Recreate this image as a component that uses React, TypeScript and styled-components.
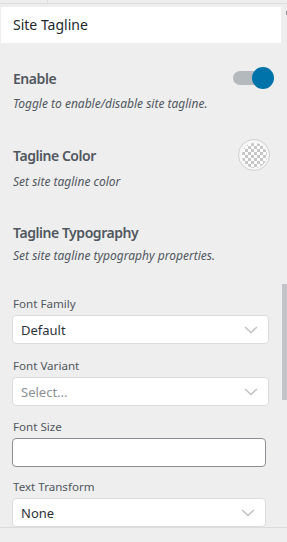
import React from "react";
import styled, { createGlobalStyle } from "styled-components";

const Global = createGlobalStyle`
  html, body { margin: 0; padding: 0; background: #eeeeee; }
  body { font-family: "Noto Sans", "Open Sans", sans-serif; width: 287px; height: 542px; overflow: hidden; }
  * { box-sizing: border-box; }
`;

const Frame = styled.div`
  height: 542px;
  display: flex;
  flex-direction: column;
`;

const TopStrip = styled.div`
  height: 4px;
  border-bottom: 1px solid #dcdcde;
  display: flex;
`;

const TopTab = styled.div`
  width: 48px;
  border-right: 1px solid #dcdcde;
`;

const Body = styled.div`
  height: 523px;
  display: flex;
  overflow: hidden;
`;

const Panel = styled.div`
  width: 282px;
  padding-top: 3px;
  display: flex;
  flex-direction: column;
`;

const Scrollbar = styled.div`
  width: 5px;
  display: flex;
  flex-direction: column;
  align-items: flex-end;
`;

const ScrollTick = styled.div`
  margin-top: 7px;
  width: 1px;
  height: 4px;
  background: #8c8f94;
`;

const ScrollThumb = styled.div`
  margin-top: 269px;
  width: 5px;
  height: 116px;
  background: #c3c4c7;
`;

const Header = styled.div`
  margin-left: 1px;
  width: 280px;
  height: 36px;
  background: #ffffff;
  padding-left: 12px;
  line-height: 36px;
  font-size: 14px;
  color: #23282d;
`;

const Content = styled.div`
  padding-left: 12px;
  display: flex;
  flex-direction: column;
`;

const Section = styled.div<{ $top: number }>`
  margin-top: ${(p) => p.$top}px;
  display: flex;
  flex-direction: column;
`;

const Row = styled.div<{ $right: number }>`
  height: 32px;
  display: flex;
  align-items: center;
  justify-content: space-between;
  padding-right: ${(p) => p.$right}px;
`;

const Title = styled.span`
  font-size: 14px;
  font-weight: 600;
  letter-spacing: -0.45px;
  color: #50575e;
  padding-left: 1px;
`;

const Desc = styled.div<{ $top: number }>`
  margin-top: ${(p) => p.$top}px;
  font-size: 12px;
  line-height: 16px;
  font-style: italic;
  color: #50575e;
  padding-left: 1px;
`;

const Toggle = styled.div`
  position: relative;
  width: 41px;
  height: 22px;
  display: flex;
  align-items: center;
`;

const Track = styled.div`
  width: 34px;
  height: 14px;
  border-radius: 7px;
  background: #b4b9be;
`;

const Knob = styled.div`
  position: absolute;
  right: 0;
  top: 0;
  width: 22px;
  height: 22px;
  border-radius: 50%;
  background: #0073aa;
`;

const Swatch = styled.div`
  width: 32px;
  height: 32px;
  border-radius: 50%;
  border: 1px solid #d0d0d0;
  background: #f7f7f7;
  display: flex;
  align-items: center;
  justify-content: center;
`;

const Checker = styled.div`
  width: 25px;
  height: 25px;
  border-radius: 50%;
  background-color: #ffffff;
  background-image: linear-gradient(45deg, #c6c6c6 25%, transparent 25%, transparent 75%, #c6c6c6 75%),
    linear-gradient(45deg, #c6c6c6 25%, transparent 25%, transparent 75%, #c6c6c6 75%);
  background-size: 6px 6px;
  background-position: 0 0, 3px 3px;
`;

const Fields = styled.div`
  margin-top: 31px;
  display: flex;
  flex-direction: column;
`;

const Field = styled.div<{ $top: number }>`
  margin-top: ${(p) => p.$top}px;
  display: flex;
  flex-direction: column;
`;

const Label = styled.label`
  font-size: 11.6px;
  line-height: 18px;
  color: #50575e;
  margin-bottom: 2px;
  padding-left: 1px;
`;

const SelectBox = styled.div<{ $width: number }>`
  width: ${(p) => p.$width}px;
  height: 29px;
  border: 1px solid #dcdcde;
  border-radius: 4px;
  background: #ffffff;
  display: flex;
  align-items: center;
  justify-content: space-between;
  padding: 0 10px 0 8px;
  flex-shrink: 0;
`;

const SelectText = styled.span<{ $placeholder?: boolean }>`
  font-size: 13px;
  color: ${(p) => (p.$placeholder ? "#8c8f94" : "#2c3338")};
`;

const TextInput = styled.div<{ $width: number }>`
  width: ${(p) => p.$width}px;
  height: 29px;
  border: 1px solid #8c8f94;
  border-radius: 4px;
  background: #ffffff;
  flex-shrink: 0;
`;

const Footer = styled.div`
  flex: 1;
  border-top: 1px solid #dcdcde;
  background: #eeeeee;
`;

const Chevron = () => (
  <svg width="14" height="8" viewBox="0 0 14 8" fill="none">
    <path d="M1 1l6 5.5L13 1" stroke="#c3c4c7" strokeWidth="1.6" />
  </svg>
);

const Select = ({ value, placeholder, width }: { value: string; placeholder?: boolean; width: number }) => (
  <SelectBox $width={width}>
    <SelectText $placeholder={placeholder}>{value}</SelectText>
    <Chevron />
  </SelectBox>
);

export default function App() {
  return (
    <>
      <Global />
      <Frame>
        <TopStrip>
          <TopTab />
        </TopStrip>
        <Body>
          <Panel>
            <Header>Site Tagline</Header>
            <Content>
              <Section $top={19}>
                <Row $right={8}>
                  <Title>Enable</Title>
                  <Toggle>
                    <Track />
                    <Knob />
                  </Toggle>
                </Row>
                <Desc $top={2}>Toggle to enable/disable site tagline.</Desc>
              </Section>
              <Section $top={27}>
                <Row $right={12}>
                  <Title>Tagline Color</Title>
                  <Swatch>
                    <Checker />
                  </Swatch>
                </Row>
                <Desc $top={3}>Set site tagline color</Desc>
              </Section>
              <Section $top={26}>
                <Row $right={12}>
                  <Title>Tagline Typography</Title>
                </Row>
                <Desc $top={0}>Set site tagline typography properties.</Desc>
              </Section>
              <Fields>
                <Field $top={0}>
                  <Label>Font Family</Label>
                  <Select value="Default" width={257} />
                </Field>
                <Field $top={13}>
                  <Label>Font Variant</Label>
                  <Select value="Select..." placeholder width={257} />
                </Field>
                <Field $top={12}>
                  <Label>Font Size</Label>
                  <TextInput $width={254} />
                </Field>
                <Field $top={11}>
                  <Label>Text Transform</Label>
                  <Select value="None" width={254} />
                </Field>
              </Fields>
            </Content>
          </Panel>
          <Scrollbar>
            <ScrollTick />
            <ScrollThumb />
          </Scrollbar>
        </Body>
        <Footer />
      </Frame>
    </>
  );
}
